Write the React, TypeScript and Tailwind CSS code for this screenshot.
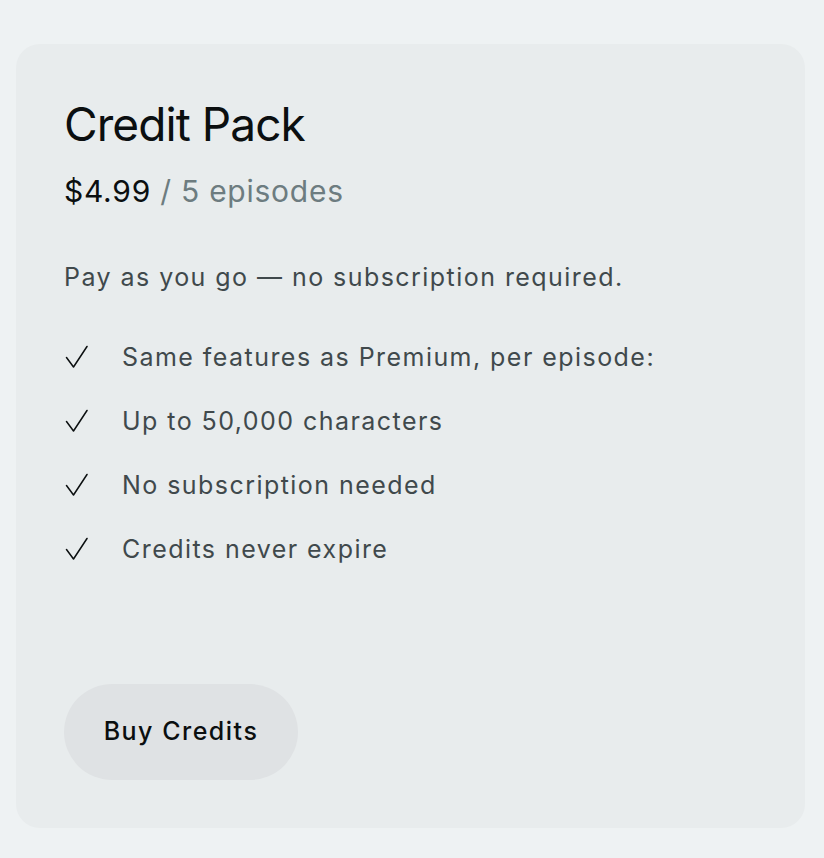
export default function App() {
  const features = [
    "Same features as Premium, per episode:",
    "Up to 50,000 characters",
    "No subscription needed",
    "Credits never expire",
  ];

  return (
    <div
      className="min-h-screen bg-[#eef2f3] pt-[44px] pl-4"
      style={{ fontFamily: "Inter, 'Noto Sans', sans-serif" }}
    >
      <div className="flex h-[784px] w-[789px] flex-col rounded-[24px] bg-[#e8eced] p-12">
        <h2 className="text-[46px] leading-[1.4] font-normal tracking-[-0.02em] text-[#0b0f10]">
          Credit Pack
        </h2>
        <p className="mt-[15px] text-[30px] leading-[40px] tracking-[0.025em] text-[#0b0f10]">
          $4.99 <span className="text-[#6d7c80]">/ 5 episodes</span>
        </p>
        <p className="mt-[49px] text-[25px] leading-[34px] tracking-[0.058em] text-[#40494c]">
          Pay as you go — no subscription required.
        </p>
        <ul className="mt-[46px] flex flex-col gap-[30px]">
          {features.map((f) => (
            <li
              key={f}
              className="flex items-center gap-[34px] text-[25px] leading-[34px] tracking-[0.058em] text-[#40494c]"
            >
              <svg width="24" height="24" viewBox="0 0 24 24" fill="none" aria-hidden className="shrink-0">
                <path
                  d="M2.5 12.5 L9.5 22 L23 1.5"
                  stroke="#0b0f10"
                  strokeWidth="1.5"
                  strokeLinecap="round"
                  strokeLinejoin="round"
                />
              </svg>
              {f}
            </li>
          ))}
        </ul>
        <div className="flex-1" />
        <button
          type="button"
          className="h-[96px] w-[234px] rounded-full bg-[#dfe2e4] text-[25px] font-medium tracking-[0.06em] text-[#0b0f10]"
        >
          Buy Credits
        </button>
      </div>
    </div>
  );
}
